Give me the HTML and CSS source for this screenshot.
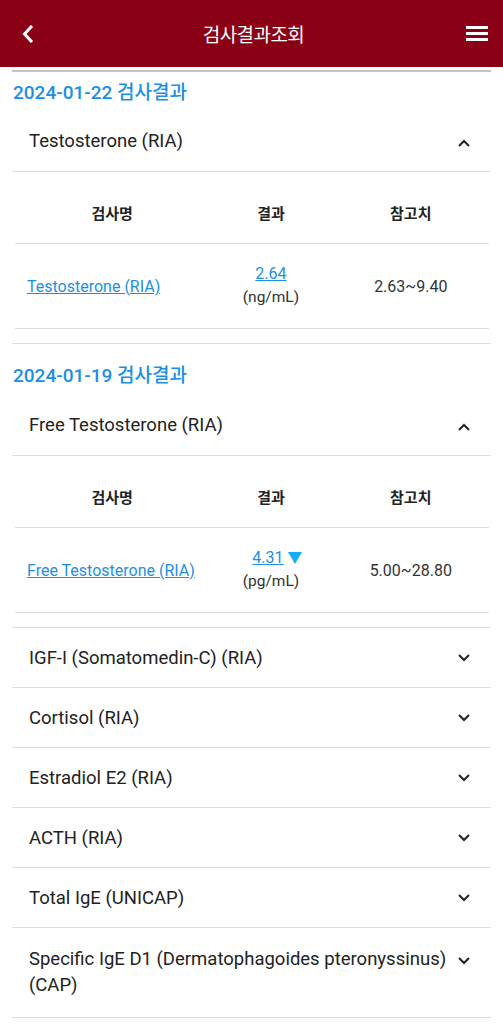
FILE: index.html
```html
<!DOCTYPE html>
<html lang="ko">
<head>
<meta charset="utf-8">
<title>검사결과조회</title>
<link rel="stylesheet" href="styles.css">
</head>
<body>
<header class="topbar">
  <button class="icon-btn back" aria-label="뒤로">
    <svg width="14" height="18" viewBox="0 0 14 18"><path d="M10 2 L3.5 9 L10 16" fill="none" stroke="#fff" stroke-width="3" stroke-linecap="square"/></svg>
  </button>
  <h1 class="title">검사결과조회</h1>
  <button class="icon-btn menu" aria-label="메뉴">
    <span></span><span></span><span></span>
  </button>
</header>

<main class="content">
  <section class="group first">
    <h2 class="group-title">2024-01-22 검사결과</h2>
    <div class="item open">
      <div class="item-head">
        <span class="item-name">Testosterone (RIA)</span>
        <svg class="chev" width="14" height="9" viewBox="0 0 14 9"><path d="M2 7 L7 2 L12 7" fill="none" stroke="#222" stroke-width="2"/></svg>
      </div>
      <div class="item-body">
        <div class="trow thead">
          <div class="c1">검사명</div><div class="c2">결과</div><div class="c3">참고치</div>
        </div>
        <div class="trow tdata">
          <div class="c1"><a href="#" class="link">Testosterone (RIA)</a></div>
          <div class="c2"><a href="#" class="val">2.64</a><span class="unit">(ng/mL)</span></div>
          <div class="c3 ref">2.63~9.40</div>
        </div>
      </div>
    </div>
  </section>

  <section class="group">
    <h2 class="group-title">2024-01-19 검사결과</h2>
    <div class="item open">
      <div class="item-head">
        <span class="item-name">Free Testosterone (RIA)</span>
        <svg class="chev" width="14" height="9" viewBox="0 0 14 9"><path d="M2 7 L7 2 L12 7" fill="none" stroke="#222" stroke-width="2"/></svg>
      </div>
      <div class="item-body">
        <div class="trow thead">
          <div class="c1">검사명</div><div class="c2">결과</div><div class="c3">참고치</div>
        </div>
        <div class="trow tdata">
          <div class="c1"><a href="#" class="link">Free Testosterone (RIA)</a></div>
          <div class="c2"><span class="valline"><a href="#" class="val">4.31</a><span class="down"></span></span><span class="unit">(pg/mL)</span></div>
          <div class="c3 ref">5.00~28.80</div>
        </div>
      </div>
    </div>
    <div class="item">
      <div class="item-head"><span class="item-name">IGF-I (Somatomedin-C) (RIA)</span>
        <svg class="chev" width="14" height="9" viewBox="0 0 14 9"><path d="M2 2 L7 7 L12 2" fill="none" stroke="#222" stroke-width="2"/></svg></div>
    </div>
    <div class="item">
      <div class="item-head"><span class="item-name">Cortisol (RIA)</span>
        <svg class="chev" width="14" height="9" viewBox="0 0 14 9"><path d="M2 2 L7 7 L12 2" fill="none" stroke="#222" stroke-width="2"/></svg></div>
    </div>
    <div class="item">
      <div class="item-head"><span class="item-name">Estradiol E2 (RIA)</span>
        <svg class="chev" width="14" height="9" viewBox="0 0 14 9"><path d="M2 2 L7 7 L12 2" fill="none" stroke="#222" stroke-width="2"/></svg></div>
    </div>
    <div class="item">
      <div class="item-head"><span class="item-name">ACTH (RIA)</span>
        <svg class="chev" width="14" height="9" viewBox="0 0 14 9"><path d="M2 2 L7 7 L12 2" fill="none" stroke="#222" stroke-width="2"/></svg></div>
    </div>
    <div class="item">
      <div class="item-head"><span class="item-name">Total IgE (UNICAP)</span>
        <svg class="chev" width="14" height="9" viewBox="0 0 14 9"><path d="M2 2 L7 7 L12 2" fill="none" stroke="#222" stroke-width="2"/></svg></div>
    </div>
    <div class="item">
      <div class="item-head multi"><span class="item-name">Specific IgE D1 (Dermatophagoides pteronyssinus) (CAP)</span>
        <svg class="chev" width="14" height="9" viewBox="0 0 14 9"><path d="M2 2 L7 7 L12 2" fill="none" stroke="#222" stroke-width="2"/></svg></div>
    </div>
  </section>
</main>
</body>
</html>
```

FILE: styles.css
```css
* { box-sizing: border-box; }
html, body { margin: 0; padding: 0; }
body {
  background: #fff;
  font-family: Roboto, "Noto Sans CJK KR", "Noto Sans", sans-serif;
  color: #222;
  width: 503px;
}

.topbar {
  height: 67px;
  background: #8a0014;
  display: flex;
  align-items: center;
  justify-content: space-between;
  padding: 0 14px 0 19px;
}
.icon-btn {
  background: none;
  border: 0;
  padding: 0;
  display: flex;
  cursor: pointer;
}
.back { width: 22px; height: 22px; align-items: center; justify-content: flex-start; padding-left: 2px; }
.title {
  margin: 0;
  color: #fff;
  font-family: "Noto Sans CJK KR", sans-serif;
  font-weight: 400;
  font-size: 19px;
  letter-spacing: -0.6px;
}
.menu {
  width: 22px;
  flex-direction: column;
  gap: 3px;
  margin-right: 1px;
}
.menu span {
  display: block;
  height: 3px;
  background: #fff;
}

.content {
  margin: 3px 12px 0;
  border-top: 2px solid #c4c4c4;
}

.group-title {
  margin: 0;
  font-family: Roboto, "Noto Sans CJK KR", sans-serif;
  font-size: 19px;
  font-weight: 500;
  color: #1b8fe6;
  padding-left: 1px;
  line-height: 24px;
  padding-top: 9px;
  padding-bottom: 6px;
}
.group + .group .group-title { padding-top: 20px; padding-bottom: 7px; }

.item { border-bottom: 1px solid #dedede; }
.item-head {
  display: flex;
  align-items: center;
  justify-content: space-between;
  min-height: 59px;
  padding: 0 20px 0 17px;
  font-size: 18.5px;
}
.item-name { line-height: 24px; }
.item.open .item-head { border-bottom: 1px solid #dedede; align-items: flex-start; padding-top: 18px; min-height: 61px; }
.item.open .chev { margin-top: 10px; }
.item-head .chev { flex: none; }
.item-head.multi { align-items: flex-start; padding-top: 18px; padding-bottom: 19px; }
.item-head.multi .item-name { line-height: 26px; padding-right: 2px; }
.item-head.multi .chev { margin-top: 10px; }

.item-body {
  padding: 10px 2px 14px 3px;
}
.trow {
  display: grid;
  grid-template-columns: 41% 26% 33%;
  align-items: center;
}
.thead {
  height: 62px;
  border-bottom: 1px solid #dedede;
  font-family: "Noto Sans CJK KR", sans-serif;
  font-weight: 700;
  font-size: 15px;
  text-align: center;
  color: #222;
}
.tdata {
  height: 85px;
  border-bottom: 1px solid #dedede;
  font-size: 16px;
}
.tdata .c1 { padding-left: 12px; }
.link { color: #1b8fe6; text-decoration: underline; font-size: 16px; }
.tdata .c2 {
  display: flex;
  flex-direction: column;
  align-items: center;
  text-align: center;
}
.val { color: #1b8fe6; text-decoration: underline; font-size: 16px; line-height: 22px; }
.valline { display: flex; align-items: center; gap: 4px; margin-left: 12px; }
.down {
  width: 0; height: 0;
  border-left: 7px solid transparent;
  border-right: 7px solid transparent;
  border-top: 12px solid #16aef0;
}
.unit { color: #333; font-size: 15.5px; line-height: 24px; }
.ref { text-align: center; color: #333; font-size: 16px; }
```
